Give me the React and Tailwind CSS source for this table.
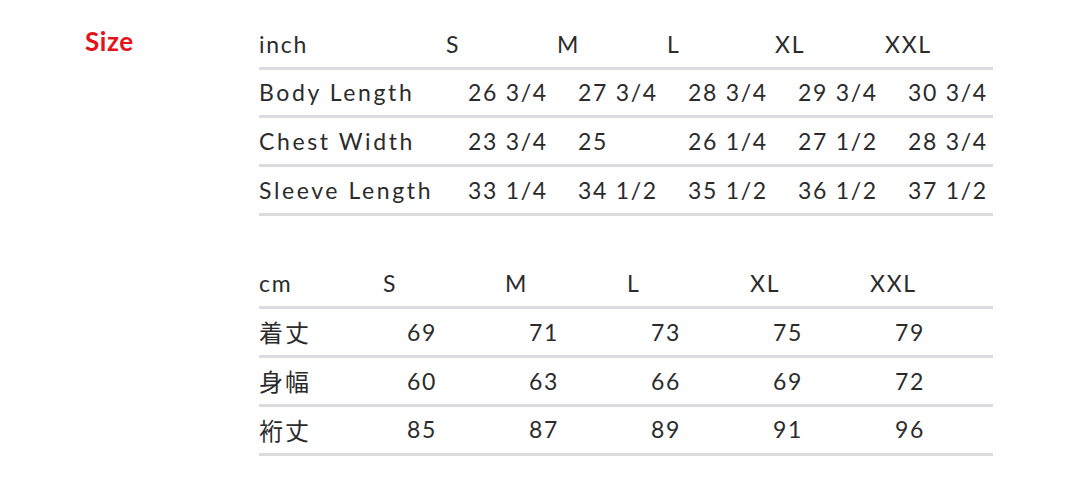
import React from 'react';

// inch table data
const inchHead = [
  { t: 'inch', w: 'w-[187px]' },
  { t: 'S', w: 'w-[111px]' },
  { t: 'M', w: 'w-[110px]' },
  { t: 'L', w: 'w-[108px]' },
  { t: 'XL', w: 'w-[110px]' },
  { t: 'XXL', w: '' },
];

const inchRows = [
  ['Body Length', '26 3/4', '27 3/4', '28 3/4', '29 3/4', '30 3/4'],
  ['Chest Width', '23 3/4', '25', '26 1/4', '27 1/2', '28 3/4'],
  ['Sleeve Length', '33 1/4', '34 1/2', '35 1/2', '36 1/2', '37 1/2'],
];

const cmHead = [
  { t: 'cm', w: 'w-[124px]' },
  { t: 'S', w: 'w-[122px]' },
  { t: 'M', w: 'w-[122px]' },
  { t: 'L', w: 'w-[123px]' },
  { t: 'XL', w: 'w-[120px]' },
  { t: 'XXL', w: '' },
];

const cmRows = [
  ['着丈', '69', '71', '73', '75', '79'],
  ['身幅', '60', '63', '66', '69', '72'],
  ['裄丈', '85', '87', '89', '91', '96'],
];

const row = 'flex items-center h-[48.7px] border-b-[3px] border-[#dcdce0]';

export default function App() {
  return (
    <div className="w-[1080px] h-[498px] bg-white text-[#2b2b2b] font-['Lato','Noto_Sans_CJK_JP',sans-serif] flex">
      <div className="w-[259px] pl-[85px] pt-[25px]">
        <span className="text-[#e3121b] font-bold text-[26px] leading-[32px] tracking-[0.6px]">Size</span>
      </div>

      <div className="w-[734px] pt-[21px] flex flex-col gap-[45px]">
        {/* inch */}
        <div className="text-[23px] tracking-[1.7px]">
          <div className={row}>
            {inchHead.map((h) => (
              <span key={h.t} className={h.w}>{h.t}</span>
            ))}
          </div>
          {inchRows.map((r) => (
            <div key={r[0]} className={row}>
              <span className="w-[209px] shrink-0 tracking-[2.6px]">{r[0]}</span>
              {r.slice(1).map((v, i) => (
                <span key={i} className="w-[110px] shrink-0">{v}</span>
              ))}
            </div>
          ))}
        </div>

        {/* cm */}
        <div className="text-[23px] tracking-[1.7px]">
          <div className={row}>
            {cmHead.map((h) => (
              <span key={h.t} className={h.w}>{h.t}</span>
            ))}
          </div>
          {cmRows.map((r) => (
            <div key={r[0]} className={row}>
              <span className="w-[148px] shrink-0 font-['Noto_Sans_CJK_JP',sans-serif] text-[24px] tracking-[2px]">{r[0]}</span>
              {r.slice(1).map((v, i) => (
                <span key={i} className="w-[122px] shrink-0">{v}</span>
              ))}
            </div>
          ))}
        </div>
      </div>
    </div>
  );
}
